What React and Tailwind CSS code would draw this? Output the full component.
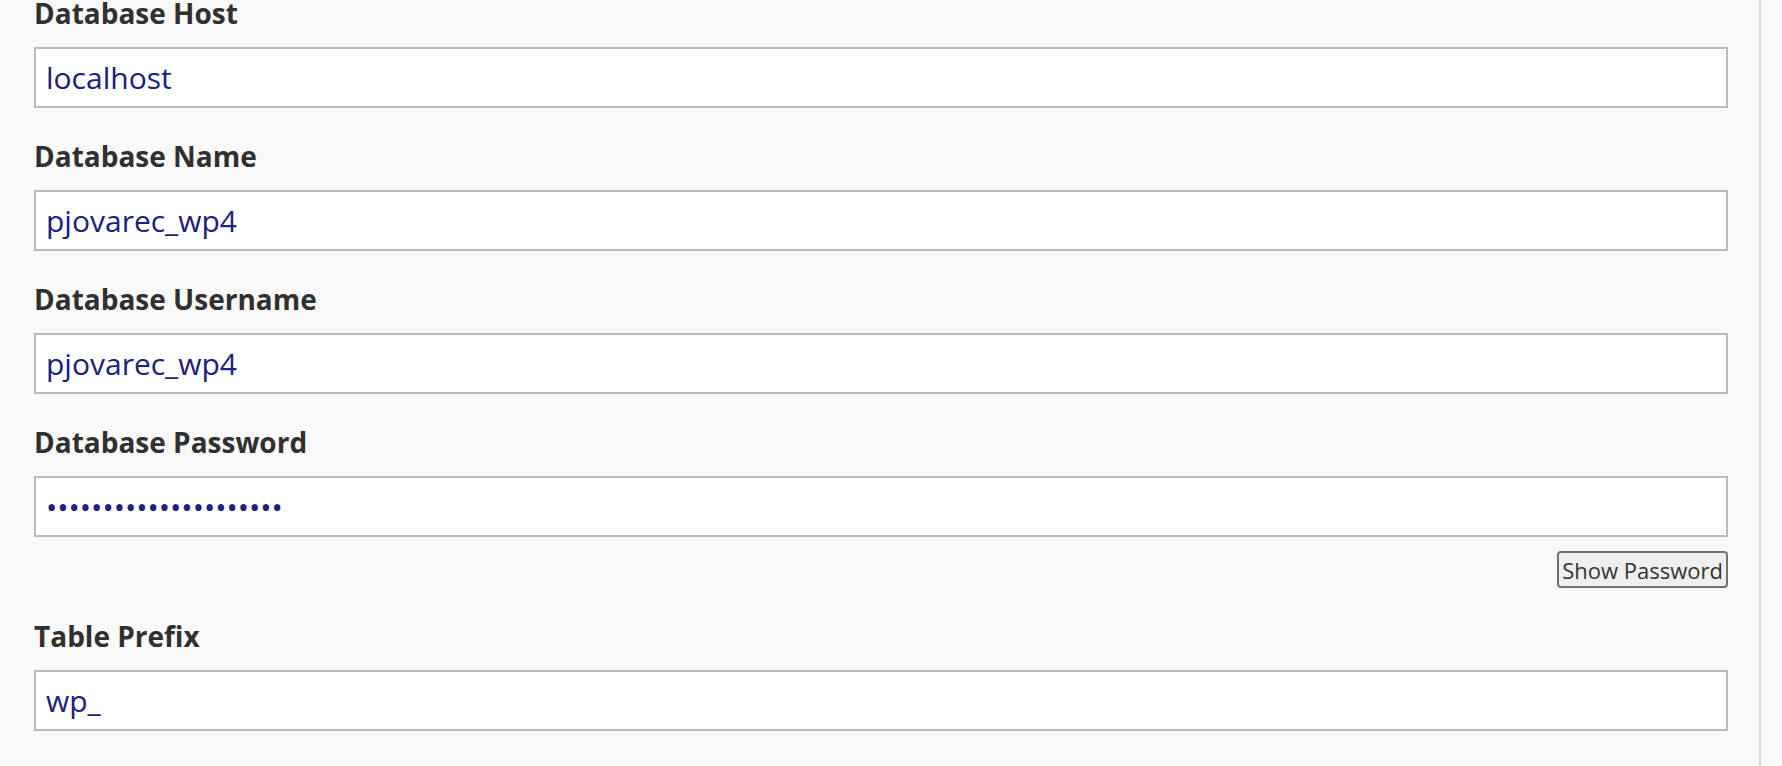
import React from "react";

function Field({ label, value, type = "text", children }) {
  return (
    <div className="mb-[35px]">
      <label className="block text-[28px] leading-[26px] font-bold text-[#303030]">{label}</label>
      <input
        type={type}
        readOnly
        value={value}
        className="mt-[21px] block w-full h-[61px] border-2 border-[#bbbbbb] bg-white px-[10px] text-[30px] text-[#20207d] outline-none"
        style={{ fontFamily: "'Open Sans', 'Noto Sans', sans-serif" }}
      />
      {children}
    </div>
  );
}

export default function App() {
  return (
    <div
      className="flex min-h-[766px] bg-[#f9f9f9]"
      style={{ fontFamily: "'Open Sans', 'Noto Sans', sans-serif" }}
    >
      <div className="w-[1761px] shrink-0 border-r-2 border-[#dddddd] pl-[34px] pr-[31px]">
        <Field label="Database Host" value="localhost" />
        <Field label="Database Name" value="pjovarec_wp4" />
        <Field label="Database Username" value="pjovarec_wp4" />
        <Field label="Database Password" value="passwordpassword12345" type="password">
          <div className="mt-[14px] flex justify-end">
            <button className="h-[37px] rounded-[4px] border-2 border-[#707070] bg-[#efefef] px-[3px] text-[22px] leading-none text-[#333333]">
              Show Password
            </button>
          </div>
        </Field>
        <Field label="Table Prefix" value="wp_" />
      </div>
      <div className="flex-1 bg-[#fafafa]" />
    </div>
  );
}
